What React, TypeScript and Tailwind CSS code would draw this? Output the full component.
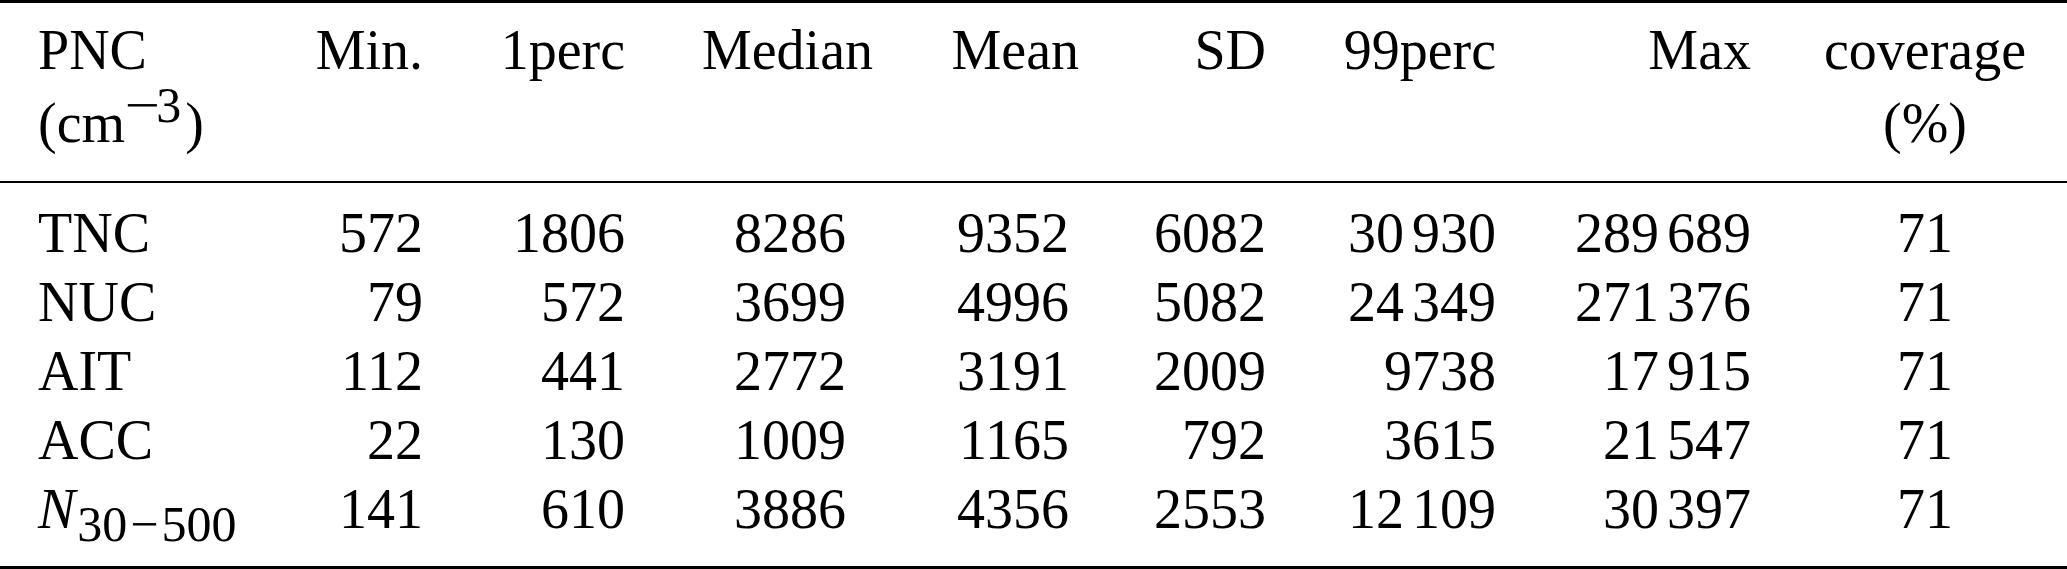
import type { FC, ReactNode } from 'react';

type Row = { label: ReactNode; values: string[] };

const rows: Row[] = [
    { label: 'TNC', values: ['572', '1806', '8286', '9352', '6082', '30 930', '289 689', '71'] },
    { label: 'NUC', values: ['79', '572', '3699', '4996', '5082', '24 349', '271 376', '71'] },
    { label: 'AIT', values: ['112', '441', '2772', '3191', '2009', '9738', '17 915', '71'] },
    { label: 'ACC', values: ['22', '130', '1009', '1165', '792', '3615', '21 547', '71'] },
    {
        label: (
            <>
                <span className="italic">N</span>
                <span className="relative top-[13px] ml-[2px] text-[50px] leading-none">
                    30<span className="mx-[3px]">−</span>500
                </span>
            </>
        ),
        values: ['141', '610', '3886', '4356', '2553', '12 109', '30 397', '71'],
    },
];

// grid columns: label, Min., 1perc, Median, Mean, SD, 99perc, Max, coverage
const cols = 'grid grid-cols-[302px_121px_202px_248px_206px_187px_230px_255px_1fr]';

// data cell alignment per column (Median / Mean numbers sit a little left of the header edge)
const dataCell = [
    'pl-[38px] text-left',
    'text-right',
    'text-right',
    'text-right pr-[27px]',
    'text-right pr-[10px]',
    'text-right',
    'text-right',
    'text-right',
    'text-center pl-[32px]',
];

// thin-space thousands separator, as in the typeset table
const Num: FC<{ value: string }> = ({ value }) => {
    const parts = value.split(' ');
    if (parts.length === 1) return <>{value}</>;
    return (
        <>
            {parts[0]}
            <span className="inline-block w-[8px]" />
            {parts[1]}
        </>
    );
};

const App: FC = () => {
    return (
        <div className="w-[2067px] h-[569px] overflow-hidden bg-white text-black font-['Liberation_Serif','Times_New_Roman',serif] text-[56px]">
            <div className="border-t-[3px] border-black pt-[13px] pb-[19px]">
                <div className={`${cols} leading-[69px]`}>
                    <div className="pl-[38px]">PNC</div>
                    <div className="text-right">Min.</div>
                    <div className="text-right">1perc</div>
                    <div className="text-right">Median</div>
                    <div className="text-right">Mean</div>
                    <div className="text-right">SD</div>
                    <div className="text-right">99perc</div>
                    <div className="text-right">Max</div>
                    <div className="text-center pl-[32px]">coverage</div>
                </div>
                <div className={`${cols} leading-[77px]`}>
                    <div className="pl-[38px]">
                        (cm
                        <span className="relative -top-[20px] ml-[3px] mr-[4px] text-[50px] leading-none">
                            <span className="inline-block scale-x-125">−</span>3
                        </span>
                        )
                    </div>
                    <div />
                    <div />
                    <div />
                    <div />
                    <div />
                    <div />
                    <div />
                    <div className="text-center pl-[32px]">(%)</div>
                </div>
            </div>

            <div className="border-t-[2px] border-b-[3px] border-black pt-[16px] pb-[22px]">
                {rows.map((row, i) => (
                    <div key={i} className={`${cols} leading-[69px]`}>
                        <div className={dataCell[0]}>{row.label}</div>
                        {row.values.map((v, j) => (
                            <div key={j} className={dataCell[j + 1]}>
                                <Num value={v} />
                            </div>
                        ))}
                    </div>
                ))}
            </div>
        </div>
    );
};

export default App;
